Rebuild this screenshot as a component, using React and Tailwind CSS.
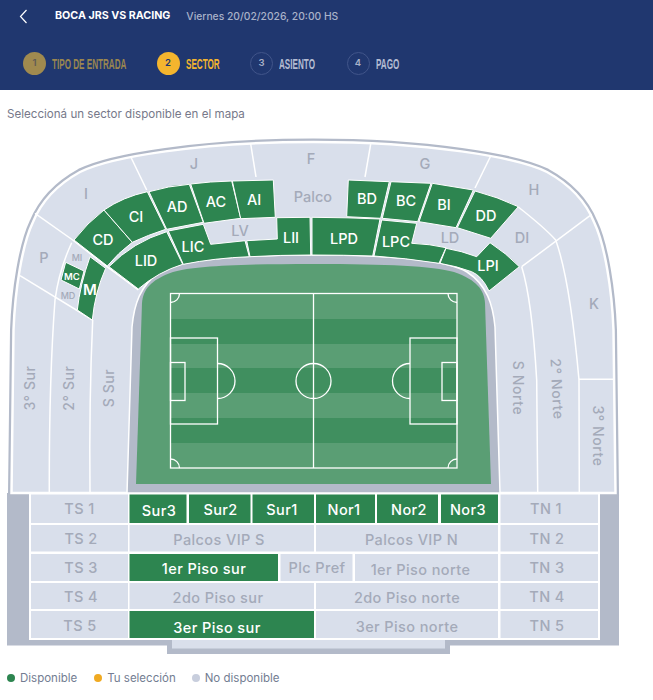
const GREEN = '#2d8550';
const LIGHT = '#d9dfeb';
const GREY = '#b3bac9';
const MUTED = '#a4aab9';

const bowl =
  'M 11.5 493 L 13.5 330 C 15 290 22 245 33 222 C 42 200 60 183 80 172 C 110 157 200 142 313.5 142 C 427 142 517 157 547 172 C 567 183 585 200 594 222 C 605 245 612 290 613.5 330 L 615.5 493 Z';
const ring =
  'M 127 493 L 132 327 C 134 305 140 285 160 272 C 175 263 215 255 313.5 255 C 412 255 452 263 467 272 C 487 285 493 305 495 327 L 500 493 Z';
const pitch =
  'M 136 484 L 142 303 C 143 290 150 280 173 272 C 195 266 240 264 313.5 264 C 387 264 432 266 454 272 C 477 280 484 290 485 303 L 491 484 Z';

const dividers = [
  'M 130.7 156.7 L 146.7 190',
  'M 250.7 144 L 256 177',
  'M 370.7 144 L 365 177',
  'M 490.7 156 L 475 188',
  'M 35 213.3 L 72.7 240 L 107 266.7 L 138.3 290',
  'M 591.7 214.3 L 521.7 266.7',
  'M 20 275.7 L 92.7 320',
  'M 71.7 242.7 Q 59 270 55 300 Q 49 380 49.3 493',
  'M 92.7 320 Q 89 400 90 493',
  'M 518.3 207 Q 545 228 555.7 240 Q 570 280 579 380 L 579.3 493',
  'M 521.7 266.7 Q 532 300 536.7 380 L 537.7 493',
  'M 579 379.3 L 613.3 379.3',
];

const sectors = [
  'M 74 240 Q 87 223 104 210 L 132.3 242.3 Q 118 253 107.3 266 Z',
  'M 104 210 Q 123 197 147.3 191.7 L 165.7 229.3 Q 148 235 132.3 242.3 Z',
  'M 149 191.7 Q 168 186 189.3 184.3 L 203.3 222.3 L 166.7 229.3 Z',
  'M 190.7 184 Q 210 181.5 231.7 181 L 240.7 218.3 L 204 223.3 Z',
  'M 232.3 181 L 273.3 180 L 275.3 217.3 L 240.7 218.7 Z',
  'M 109 266.7 Q 133 242 166.7 231.7 L 182.7 264.3 Q 158 272 138.3 289 Z',
  'M 168.3 231 L 203.3 224.3 L 210.7 244.3 L 245 240.7 L 249.3 256.7 Q 215 258 183.3 264.3 Z',
  'M 246.7 240.7 L 277.3 239 L 276.7 217.7 L 310 217.3 L 310.7 255 Q 280 255 250 256.7 Z',
  'M 312 217.3 Q 348 217.5 380 219 L 372.7 256 Q 345 255 312 255 Z',
  'M 381.7 220 L 416.7 223.3 L 411.7 243.3 Q 430 244 446 247.7 L 439 263.3 Q 405 258 374 256 Z',
  'M 490 242.7 Q 506 253 519.3 266.7 L 489 291 Q 482 276 471.7 271.7 Q 456 266 440 263.3 L 446 248.3 Q 462 251 476.7 256.7 Z',
  'M 348.3 180 L 389.3 181.7 L 380.7 218.3 L 346.7 216.7 Z',
  'M 391 181.7 L 431 183.3 L 417.7 221.7 L 382.3 218.3 Z',
  'M 432.3 183.3 L 473.3 190 L 456 227.7 L 419 221.7 Z',
  'M 475 191 Q 498 197 518.3 206.7 L 490.7 238.3 L 457.3 227.7 Z',
  'M 90 256.7 L 105.7 268.3 Q 95 292 92.3 320 L 77.3 310 Q 80 285 90 256.7 Z',
  'M 65.7 262.3 L 84 271 L 79.3 289 L 61 280 Z',
];

const labels = [
  ['J', 194, 169], ['F', 311, 164], ['G', 425, 169], ['I', 86, 199], ['H', 534, 195],
  ['P', 44, 263], ['K', 594, 309], ['Palco', 313, 202], ['LV', 240, 236], ['LD', 450, 243],
  ['DI', 522, 243],
];

const greenLabels = [
  ['CD', 103, 245], ['CI', 136, 222], ['AD', 177, 212], ['AC', 216, 207], ['AI', 254, 205],
  ['LID', 146, 266], ['LIC', 193, 252], ['LII', 291, 243], ['LPD', 344, 244], ['LPC', 396, 247],
  ['LPI', 488, 271], ['BD', 367, 204], ['BC', 406, 206], ['BI', 444, 210], ['DD', 486, 221],
];

const vertical = [
  ['3° Sur', 30, 388, -90], ['2° Sur', 69, 388, -90], ['S Sur', 109, 388, -90],
  ['S Norte', 518, 388, 90], ['2° Norte', 557, 389, 87], ['3° Norte', 598, 436, 90],
];

// name, x, y, w, h, available, text x, text baseline
const cells = [
  ['TS 1', 31, 494.5, 97, 28.5, 0, 79.5, 514], ['Sur3', 129.5, 494.5, 57, 28.5, 1, 159, 515.5], ['Sur2', 189, 494.5, 61.5, 28.5, 1, 220.5, 515],
  ['Sur1', 252.5, 494.5, 61.5, 28.5, 1, 282, 515], ['Nor1', 316, 494.5, 59, 28.5, 1, 344, 514.5], ['Nor2', 377, 494.5, 61, 28.5, 1, 409, 514.5],
  ['Nor3', 441, 494.5, 57, 28.5, 1, 468, 515], ['TN 1', 500.5, 494.5, 97.5, 28.5, 0, 546, 514],
  ['TS 2', 31, 525, 97, 26.5, 0, 81, 544], ['Palcos VIP S', 129.5, 525, 184.5, 26.5, 0, 219, 545], ['Palcos VIP N', 316, 525, 182, 26.5, 0, 411.5, 545],
  ['TN 2', 500.5, 525, 97.5, 26.5, 0, 547, 544],
  ['TS 3', 31, 554, 97, 27, 0, 81, 573], ['1er Piso sur', 129.5, 554, 148.5, 27, 1, 204, 574], ['Plc Pref', 280.5, 554, 72, 27, 0, 317, 572.5],
  ['1er Piso norte', 355, 554, 143, 27, 0, 420.5, 574.5], ['TN 3', 500.5, 554, 97.5, 27, 0, 547, 573],
  ['TS 4', 31, 583, 97, 26, 0, 81, 602], ['2do Piso sur', 129.5, 583, 184.5, 26, 0, 218, 602.5], ['2do Piso norte', 316, 583, 182, 26, 0, 407, 602.5],
  ['TN 4', 500.5, 583, 97.5, 26, 0, 547, 602],
  ['TS 5', 31, 611, 97, 27, 0, 80, 631], ['3er Piso sur', 129.5, 611, 184.5, 27, 1, 217, 632.5], ['3er Piso norte', 316, 611, 182, 27, 0, 407, 631.5],
  ['TN 5', 500.5, 611, 97.5, 27, 0, 547, 631],
];

const steps = [
  { n: 1, name: 'TIPO DE ENTRADA', ring: 'bg-[#a08a4f] text-[#5f5a55]', text: 'text-[#9a8650]', w: 'w-[74px]', mr: 'mr-[30.5px]' },
  { n: 2, name: 'SECTOR', ring: 'bg-[#f4b52e] text-[#20376f]', text: 'text-[#f4b52e]', w: 'w-[33px]', mr: 'mr-[31.5px]' },
  { n: 3, name: 'ASIENTO', ring: 'border border-[#41558a] text-[#a9b2c9]', text: 'text-[#b4bcd2]', w: 'w-[35px]', mr: 'mr-[32.5px]' },
  { n: 4, name: 'PAGO', ring: 'border border-[#41558a] text-[#a9b2c9]', text: 'text-[#b4bcd2]', w: 'w-[23px]', mr: '' },
];

const legend = [
  ['Disponible', 'bg-[#2d8550]', 'mr-[17px]'],
  ['Tu selección', 'bg-[#f0aa22]', 'mr-[16px]'],
  ['No disponible', 'bg-[#c8cedd]', ''],
];

const Pitch = () => (
  <g>
    <path d={ring} fill={GREY} stroke="#fff" strokeWidth="1.5" />
    <path d={pitch} fill="#5a9e74" />
    <rect x="171" y="319" width="286" height="25" fill="#408f5f" />
    <rect x="171" y="368" width="286" height="25" fill="#408f5f" />
    <rect x="171" y="418" width="286" height="25" fill="#408f5f" />
    <g fill="none" stroke="#fff" strokeWidth="1.3">
      <rect x="170.5" y="293.5" width="286.5" height="174.5" />
      <path d="M 313.5 293.5 V 468" />
      <circle cx="313.5" cy="381" r="17.5" />
      <rect x="170.5" y="338" width="47" height="86" />
      <rect x="170.5" y="362.5" width="14.5" height="38" />
      <path d="M 217.5 363.5 A 17.5 17.5 0 0 1 217.5 398.5" />
      <rect x="410" y="338" width="47" height="86" />
      <rect x="442" y="362.5" width="15" height="38" />
      <path d="M 410 363.5 A 17.5 17.5 0 0 0 410 398.5" />
      <path d="M 170.5 302.5 A 9 9 0 0 0 179.5 293.5" />
      <path d="M 170.5 459 A 9 9 0 0 1 179.5 468" />
      <path d="M 457 302.5 A 9 9 0 0 1 448 293.5" />
      <path d="M 457 459 A 9 9 0 0 0 448 468" />
    </g>
  </g>
);

const StadiumMap = () => (
  <svg viewBox="0 130 653 530" className="block w-[653px] h-[530px]" fontFamily="Inter, 'Liberation Sans', sans-serif">
    <rect x="7" y="493" width="612" height="152.5" fill={GREY} />
    <rect x="167" y="645" width="283" height="9" fill={GREY} />
    <rect x="172" y="640" width="273" height="8.5" fill={LIGHT} />

    <path d={bowl} fill="none" stroke={GREY} strokeWidth="7" />
    <path d={bowl} fill={LIGHT} stroke="#fff" strokeWidth="2.5" />
    <g fill="none" stroke="#fff" strokeWidth="1.5">
      {dividers.map((d) => <path key={d} d={d} />)}
    </g>
    <Pitch />
    <g fill={GREEN} stroke="#fff" strokeWidth="1" strokeLinejoin="round">
      {sectors.map((d) => <path key={d} d={d} />)}
    </g>

    <g fill={MUTED} fontSize="14.5" fontWeight="500" textAnchor="middle">
      {labels.map(([t, x, y]) => <text key={t} x={x} y={y}>{t}</text>)}
      <text x="77" y="261" fontSize="9">MI</text>
      <text x="68" y="299" fontSize="9">MD</text>
      {vertical.map(([t, x, y, r]) => (
        <text key={t} x={x} y={y} dy="5" fontSize="14" letterSpacing="0.6" transform={`rotate(${r} ${x} ${y})`}>{t}</text>
      ))}
    </g>
    <g fill="#fff" fontSize="14.5" fontWeight="500" textAnchor="middle">
      {greenLabels.map(([t, x, y]) => <text key={t} x={x} y={y}>{t}</text>)}
      <text x="72" y="280" fontSize="9.5" fontWeight="600">MC</text>
      <text x="90" y="295" fontSize="15" fontWeight="600">M</text>
    </g>

    <rect x="29" y="493" width="571" height="147" fill="#fff" />
    {cells.map(([t, x, y, w, h, on, tx, ty]) => (
      <g key={t}>
        <rect x={x} y={y} width={w} height={h} fill={on ? GREEN : LIGHT} />
        <text x={tx} y={ty} fontSize="14.5" fontWeight="500" letterSpacing="0.4" textAnchor="middle" fill={on ? '#fff' : MUTED}>
          {t}
        </text>
      </g>
    ))}
  </svg>
);

const App = () => {
  return (
    <div className="w-[653px] h-[700px] bg-white overflow-hidden font-['Inter','Liberation_Sans',sans-serif]">
      <header className="h-[90px] bg-[#20376f]">
        <div className="flex items-center pl-[19px] pt-[9px] h-[24px]">
          <svg width="9" height="15" viewBox="0 0 9 15" fill="none" stroke="#fff" strokeWidth="1.2">
            <path d="M 7.5 1 L 1.5 7.5 L 7.5 14" />
          </svg>
          <span className="ml-[27px] text-[10.7px] font-bold text-white whitespace-nowrap">BOCA JRS VS RACING</span>
          <span className="ml-4 text-[10.3px] font-medium text-[#a9b2c9] whitespace-nowrap">Viernes 20/02/2026, 20:00 HS</span>
        </div>
        <div className="flex items-center pl-[23px] mt-[27.5px]">
          {steps.map((s) => (
            <div key={s.n} className={`flex items-center ${s.mr}`}>
              <div className={`w-[23px] h-[23px] rounded-full flex items-center justify-center text-[9.5px] font-semibold ${s.ring}`}>
                {s.n}
              </div>
              <div className={`ml-[6px] ${s.w} h-4 leading-4`}>
                <span className={`inline-block origin-left scale-x-[0.56] whitespace-nowrap text-[14.5px] font-bold font-['Liberation_Sans',sans-serif] ${s.text}`}>
                  {s.name}
                </span>
              </div>
            </div>
          ))}
        </div>
      </header>
      <p className="pl-[7px] pt-[16px] h-[40px] text-[11.6px] leading-4 text-[#77798a]">Seleccioná un sector disponible en el mapa</p>
      <StadiumMap />
      <div className="flex items-center pl-[7px] mt-[10px]">
        {legend.map(([t, dot, mr]) => (
          <div key={t} className={`flex items-center ${mr}`}>
            <span className={`w-2 h-2 rounded-full ${dot}`} />
            <span className="ml-[5px] text-[11.5px] leading-4 text-[#737d92]">{t}</span>
          </div>
        ))}
      </div>
    </div>
  );
};

export default App;
